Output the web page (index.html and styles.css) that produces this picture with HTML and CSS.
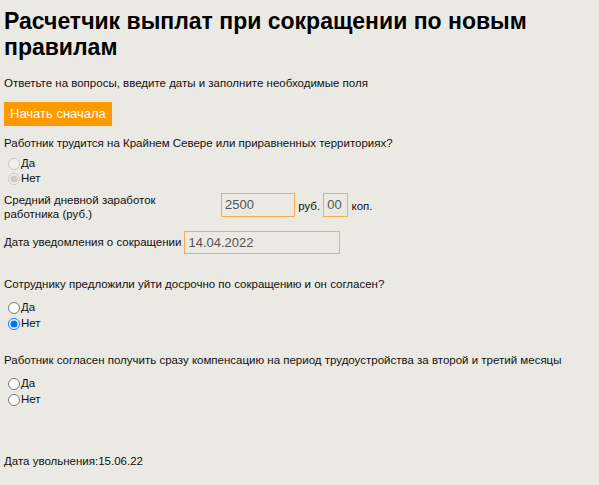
FILE: index.html
```html
<!DOCTYPE html>
<html lang="ru">
  <head>
    <meta charset="UTF-8" />
    <meta name="viewport" content="width=device-width, initial-scale=1.0" />
    <title>Расчетчик выплат при сокращении</title>
    <link rel="stylesheet" href="styles.css">
  </head>
  <body>
    <div class="calc">
      <h1 class="title">Расчетчик выплат при сокращении по новым правилам</h1>
      <p class="intro">Ответьте на вопросы, введите даты и заполните необходимые поля</p>

      <button class="restart">Начать сначала</button>

      <div class="question first">
        <p class="question-text">Работник трудится на Крайнем Севере или приравненных территориях?</p>
        <label class="choice"><input type="radio" name="north" disabled />Да</label>
        <label class="choice"><input type="radio" name="north" checked disabled />Нет</label>
      </div>

      <div class="salary">
        <label class="salary-label" for="rub">Средний дневной заработок работника (руб.)</label>
        <div class="salary-inputs">
          <input class="field rub" id="rub" type="text" value="2500" /> руб.
          <input class="field kop" type="text" value="00" /> коп.
        </div>
      </div>

      <div class="notice">
        <label for="notice-date">Дата уведомления о сокращении</label>
        <input class="field date" id="notice-date" type="text" value="14.04.2022" />
      </div>

      <div class="question early">
        <p class="question-text">Сотруднику предложили уйти досрочно по сокращению и он согласен?</p>
        <label class="choice"><input type="radio" name="early" />Да</label>
        <label class="choice"><input type="radio" name="early" checked />Нет</label>
      </div>

      <div class="question compensation">
        <p class="question-text">Работник согласен получить сразу компенсацию на период трудоустройства за второй и третий месяцы</p>
        <label class="choice"><input type="radio" name="comp" />Да</label>
        <label class="choice"><input type="radio" name="comp" />Нет</label>
      </div>

      <p class="result">Дата увольнения:15.06.22</p>
    </div>
  </body>
</html>
```

FILE: styles.css
```css
body {
  margin: 0;
  padding: 4px;
  background-color: #ebe9e4;
  color: #111;
  font-family: "Liberation Sans", Arial, sans-serif;
  font-size: 11.5px;
  line-height: 14px;
}
p {
  margin: 0;
}
.title {
  margin: 4.3px 0 0;
  font-size: 23px;
  line-height: 26px;
  font-weight: bold;
  color: #000;
}
.intro {
  margin-top: 15.4px;
}
.restart {
  display: block;
  margin-top: 12.3px;
  padding: 0 6px;
  height: 24px;
  background-color: #ff9900;
  color: white;
  border: none;
  font-family: inherit;
  font-size: 13px;
  cursor: pointer;
}
.question-text {
  margin-bottom: 9.2px;
}
.first {
  margin-top: 10px;
}
.first .question-text {
  margin-bottom: 5.7px;
}
.early {
  margin-top: 23.3px;
}
.compensation {
  margin-top: 21.8px;
}
.choice {
  display: block;
  height: 15.5px;
}
.choice input {
  margin: 2px 1px 0 4px;
  width: 12px;
  height: 12px;
  vertical-align: top;
}
.salary {
  display: flex;
  align-items: flex-start;
  gap: 57px;
  margin-top: 6.3px;
}
.salary-label {
  width: 160px;
}
.field {
  box-sizing: border-box;
  height: 24px;
  padding: 0 3px;
  border: 1px solid #f6ac48;
  background: transparent;
  color: #555;
  font-family: inherit;
  font-size: 13px;
}
.rub {
  width: 74px;
}
.kop {
  width: 25px;
}
.notice {
  display: flex;
  align-items: center;
  gap: 3px;
  margin-top: 10px;
}
.date {
  width: 156px;
  height: 23px;
}
.result {
  margin-top: 46.8px;
}
```
